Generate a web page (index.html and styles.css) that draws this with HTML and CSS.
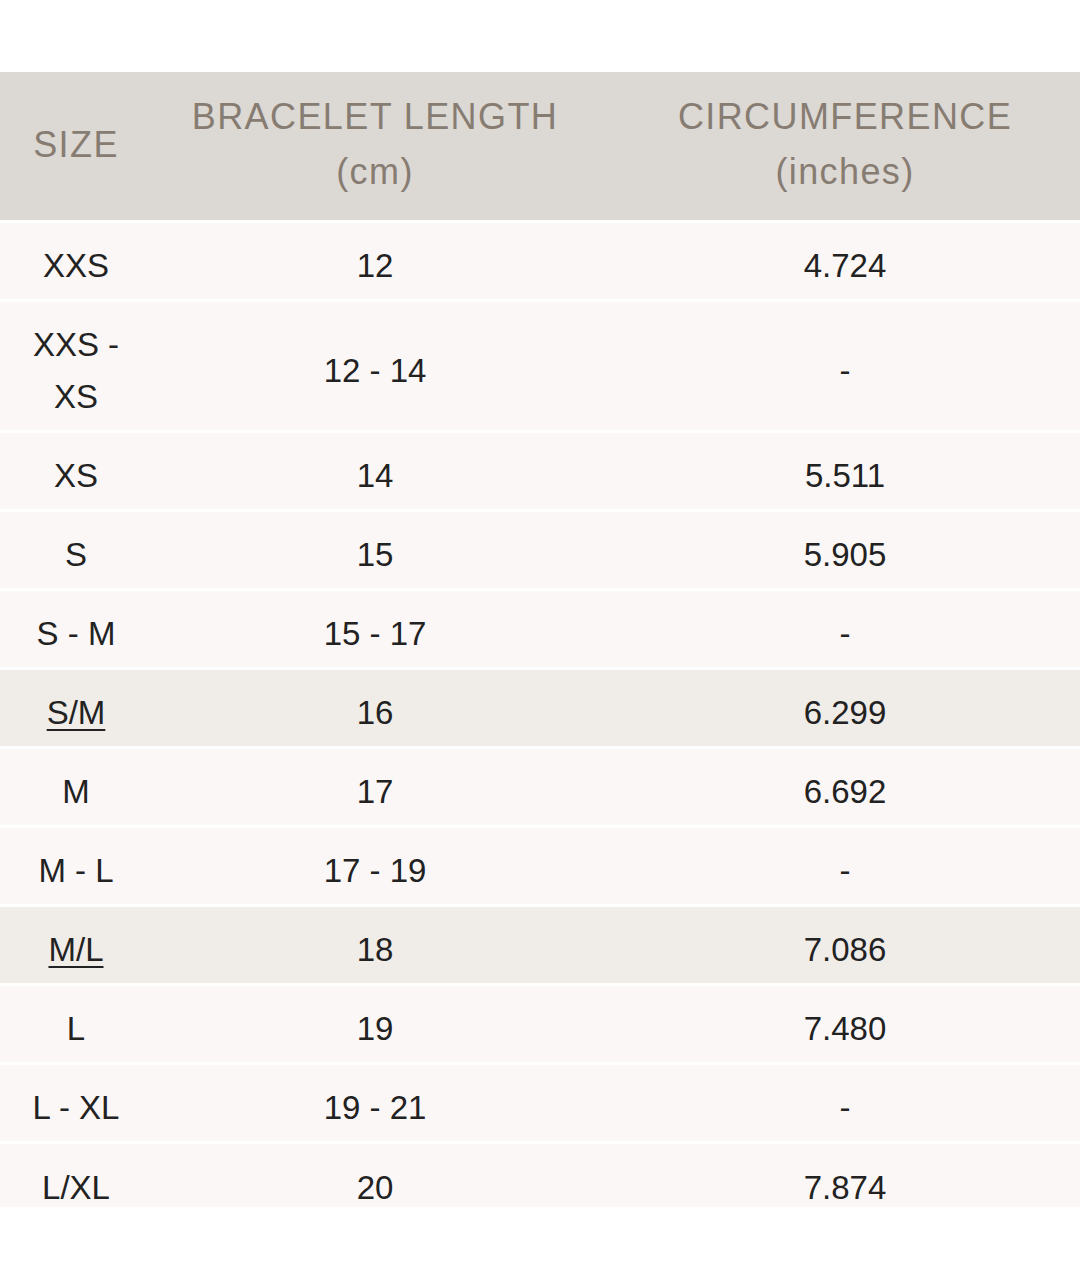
FILE: index.html
```html
<!DOCTYPE html>
<html lang="en">
<head>
<meta charset="utf-8">
<title>Bracelet size guide</title>
<link rel="stylesheet" href="styles.css">
</head>
<body>
<table class="size-table">
  <colgroup>
    <col class="col-size">
    <col class="col-length">
    <col class="col-circ">
  </colgroup>
  <thead>
    <tr>
      <th>SIZE</th>
      <th>BRACELET LENGTH<br>(cm)</th>
      <th>CIRCUMFERENCE<br>(inches)</th>
    </tr>
  </thead>
  <tbody>
    <tr><td>XXS</td><td>12</td><td>4.724</td></tr>
    <tr><td>XXS - XS</td><td>12 - 14</td><td>-</td></tr>
    <tr><td>XS</td><td>14</td><td>5.511</td></tr>
    <tr><td>S</td><td>15</td><td>5.905</td></tr>
    <tr><td>S - M</td><td>15 - 17</td><td>-</td></tr>
    <tr class="hl"><td><a href="#">S/M</a></td><td>16</td><td>6.299</td></tr>
    <tr><td>M</td><td>17</td><td>6.692</td></tr>
    <tr><td>M - L</td><td>17 - 19</td><td>-</td></tr>
    <tr class="hl"><td><a href="#">M/L</a></td><td>18</td><td>7.086</td></tr>
    <tr><td>L</td><td>19</td><td>7.480</td></tr>
    <tr><td>L - XL</td><td>19 - 21</td><td>-</td></tr>
    <tr class="last"><td>L/XL</td><td>20</td><td>7.874</td></tr>
  </tbody>
</table>
</body>
</html>
```
FILE: styles.css
```css
html, body {
  margin: 0;
  padding: 0;
  background: #ffffff;
  overflow: hidden;
}

body {
  font-family: "Liberation Sans", Arial, sans-serif;
  color: #222222;
}

.size-table {
  width: 1092px;
  table-layout: fixed;
  border-collapse: separate;
  border-spacing: 0 3px;
  margin-top: 69px;
}

.col-size { width: 152px; }
.col-length { width: 446px; }
.col-circ { width: 494px; }

.size-table th {
  background: #dcd8d4;
  color: #877c72;
  font-weight: normal;
  font-size: 36px;
  letter-spacing: 1.4px;
  line-height: 55px;
  padding: 17px 0 21px;
  text-align: center;
}

.size-table td {
  background: #fbf7f6;
  font-size: 33px;
  line-height: 52px;
  padding: 17px 12px 7px;
  text-align: center;
}

.size-table tr.hl td {
  background: #f0ece8;
}

.size-table tr.last td {
  line-height: 36px;
  padding: 26px 12px 1px;
}

.size-table a {
  color: #222222;
  text-decoration: underline;
  text-underline-offset: 5px;
  text-decoration-thickness: 2px;
}
```
